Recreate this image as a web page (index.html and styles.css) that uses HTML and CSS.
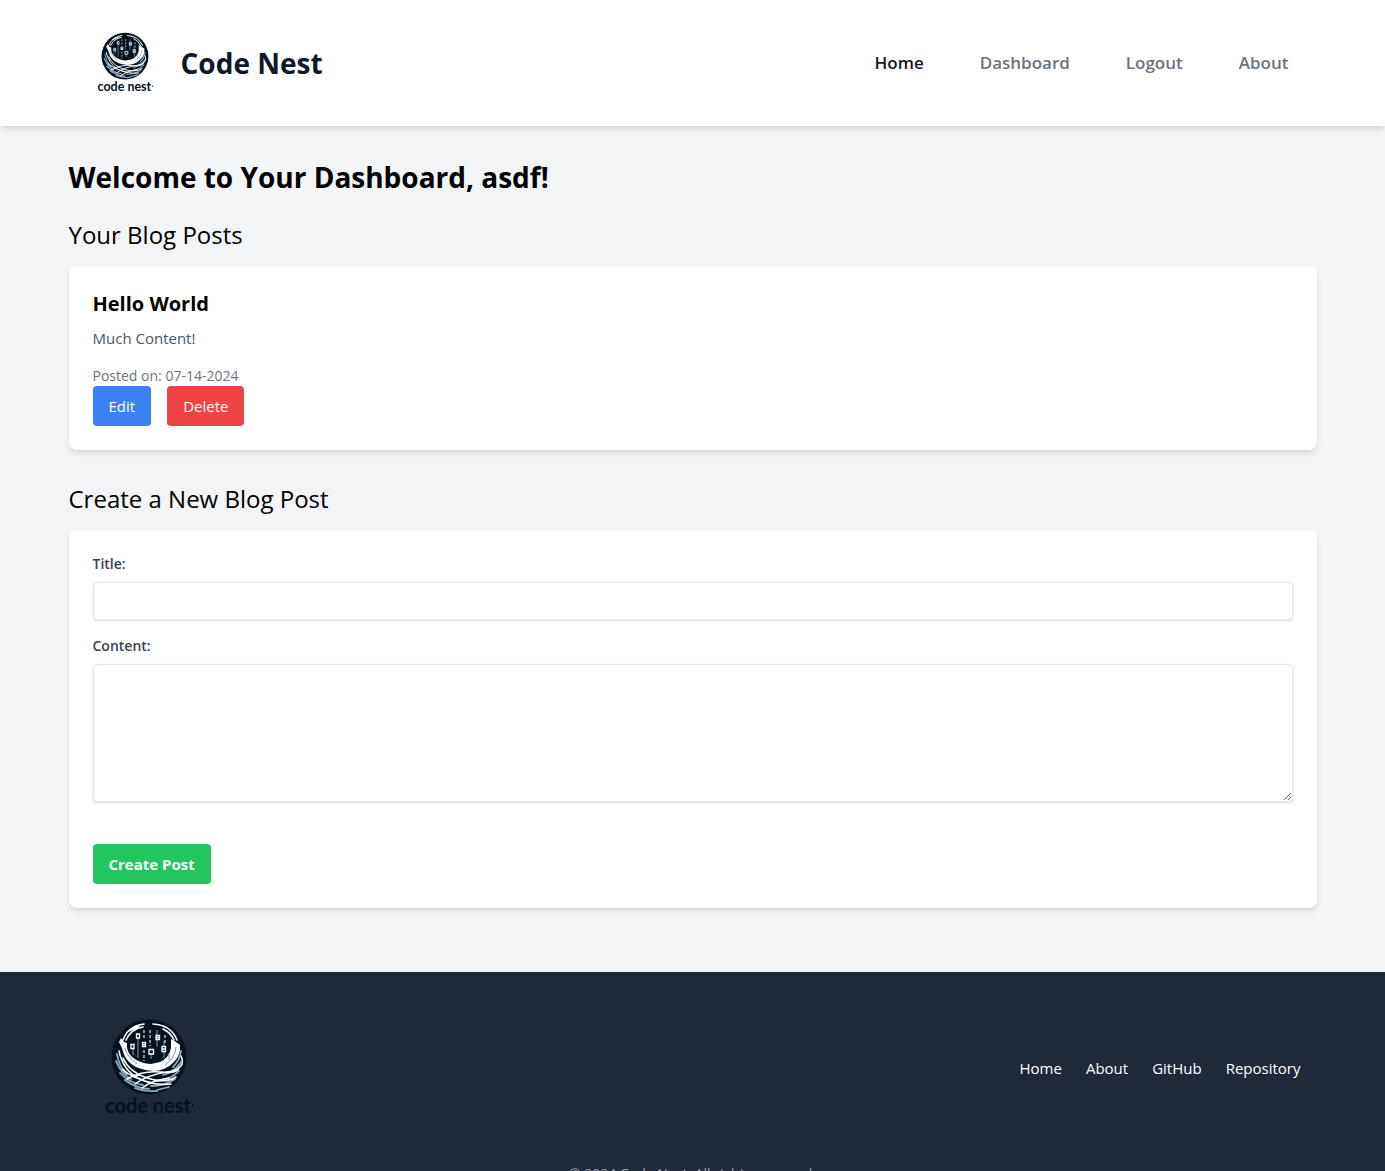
FILE: index.html
```html
<!DOCTYPE html>
<html lang="en">
<head>
<meta charset="utf-8">
<meta name="viewport" content="width=device-width, initial-scale=1">
<title>Code Nest</title>
<link rel="stylesheet" href="styles.css">
</head>
<body>
<svg class="sprite" aria-hidden="true">
  <symbol id="nest" viewBox="0 0 128 128">
    <circle cx="64" cy="53" r="37.5" fill="#06121d"/>
    <g fill="none" stroke="#8fa9bd" stroke-width="1.8" stroke-linecap="round">
      <path d="M32 50Q34 63 42 70M31 57Q36 70 46 75M35 69Q44 79 58 81M40 76Q50 84 64 85M50 84Q60 88 72 87M66 82Q80 82 90 75M70 77Q86 76 94 67M78 71Q90 68 96 58M72 86L84 83M96 47Q95 56 88 63"/>
    </g>
    <g fill="none" stroke="#fff" stroke-linecap="round">
      <path stroke-width="1.6" d="M38 36Q43 22 59 20M41 36Q46 25 58 23M68 20Q86 21 92 36M78 25Q86 29 89 36M44 27L54 22"/>
      <path stroke-width="1.5" d="M34 47Q38 66 53 74T86 80M38 54Q44 68 62 74T91 73M37 65Q48 75 68 79M42 75Q58 66 76 68T94 63M50 80Q62 71 82 68T96 52M57 84Q68 76 84 74"/>
    </g>
    <path fill="#fff" d="M34 38L36 34L39 38L42 39Q41 47 47 53Q56 60 66 60L75 58Q84 54 86 44L86 35L91 38L95 41Q96 51 89 58Q80 67 68 67Q52 66 44 58Q39 53 37 44Z"/>
    <path fill="none" stroke="#7892a8" stroke-width="1" d="M40 44Q42 53 52 60M91 43Q90 54 80 61"/>
    <g stroke="#8997a3" stroke-width="1">
      <path d="M53 34V54M79 37V54M48 45V51M72 26V43M84 49V56M66 50V55"/>
    </g>
    <g fill="#06121d" stroke="#fff" stroke-width="1.3">
      <path d="M51.500 30h3v4h-3zM57.500 38.500h3v4h-3zM71 31.500h3.500v4H71zM64 45.500h4.500v4.500H64zM77 42.500h3.500v5H77zM46 40.500h3v4h-3z"/>
      <path d="M71 33.500h3.500M57.500 40.500h3M77 45h3.500"/>
    </g>
    <path stroke="#dbe3e9" stroke-width="1.2" stroke-dasharray="3 2" d="M59 26V36M65 26V42M80 31V40M59 46V57"/>
    <text x="20" y="109" class="logo-word">code nest</text>
    <circle cx="108" cy="101" r="1" fill="#06121d"/>
  </symbol>
</svg>

<header class="site-header">
  <div class="container header-row">
    <div class="brand">
      <svg class="logo-small" role="img" aria-label="Code Nest logo"><use href="#nest"/></svg>
      <span class="brand-name">Code Nest</span>
    </div>
    <nav class="main-nav" aria-label="Main">
      <a class="nav-link active" href="#">Home</a>
      <a class="nav-link" href="#">Dashboard</a>
      <a class="nav-link" href="#">Logout</a>
      <a class="nav-link" href="#">About</a>
    </nav>
  </div>
</header>

<main class="container dashboard">
  <h1 class="page-title">Welcome to Your Dashboard, asdf!</h1>
  <section class="section">
    <h2 class="section-title">Your Blog Posts</h2>
    <article class="card">
      <h3 class="post-title">Hello World</h3>
      <p class="post-content">Much Content!</p>
      <p class="post-date">Posted on: 07-14-2024</p>
      <div class="actions">
        <button class="btn btn-edit" type="button">Edit</button>
        <button class="btn btn-delete" type="button">Delete</button>
      </div>
    </article>
  </section>
  <section class="section">
    <h2 class="section-title">Create a New Blog Post</h2>
    <form class="card">
      <label class="label" for="title">Title:</label>
      <input class="field field-title" id="title" name="title" type="text">
      <label class="label" for="content">Content:</label>
      <textarea class="field field-content" id="content" name="content" rows="5"></textarea>
      <button class="btn btn-create" type="submit">Create Post</button>
    </form>
  </section>
</main>

<footer class="site-footer">
  <div class="container footer-row">
    <svg class="logo-large" role="img" aria-label="Code Nest logo"><use href="#nest"/></svg>
    <nav class="footer-nav" aria-label="Footer">
      <a class="footer-link" href="#">Home</a>
      <a class="footer-link" href="#">About</a>
      <a class="footer-link" href="#">GitHub</a>
      <a class="footer-link" href="#">Repository</a>
    </nav>
  </div>
  <p class="copyright">© 2024 Code Nest. All rights reserved.</p>
</footer>
</body>
</html>
```
FILE: styles.css
```css
*, *::before, *::after { box-sizing: border-box; }

html, body { height: 100%; }

body {
  margin: 0;
  overflow: hidden auto;
  background: #f3f4f6;
  color: #000;
  font: 15px/24px "Segoe UI", "Open Sans", "Noto Sans", sans-serif;
}

h1, h2, h3, p { margin: 0; }
a { color: inherit; text-decoration: none; }

.sprite { display: none; }
.logo-word { font: 700 20px "Lato", sans-serif; fill: #06121d; }

.container {
  max-width: 1280px;
  margin: 0 auto;
  padding: 0 16px;
}

.site-header {
  background: #fff;
  box-shadow: 0 4px 6px -1px rgb(0 0 0 / 10%), 0 2px 4px -2px rgb(0 0 0 / 10%);
}

.header-row {
  display: flex;
  align-items: center;
  justify-content: space-between;
  min-height: 126px;
  padding: 16px 32px;
}

.brand { display: flex; align-items: center; gap: 16px; }
.logo-small { width: 80px; height: 80px; }
.brand-name { font-size: 28px; line-height: 36px; font-weight: 700; color: #111827; }

.main-nav { display: flex; gap: 32px; }
.nav-link { padding: 8px 12px; font-size: 17px; line-height: 24px; font-weight: 600; color: #6b7280; }
.nav-link.active { color: #111827; }

.dashboard { padding-top: 32px; padding-bottom: 32px; }
.page-title { margin-bottom: 22px; font-size: 28px; line-height: 38px; font-weight: 700; }
.section { margin-bottom: 32px; }
.section-title { margin-bottom: 14px; font-size: 24px; line-height: 34px; font-weight: 500; }

.card {
  padding: 24px;
  border-radius: 8px;
  background: #fff;
  box-shadow: 0 4px 6px -1px rgb(0 0 0 / 10%), 0 2px 4px -2px rgb(0 0 0 / 10%);
}

.post-title { margin-bottom: 8px; font-size: 20px; line-height: 28px; font-weight: 700; }
.post-content { margin-bottom: 16px; color: #4b5563; }
.post-date { font-size: 14px; line-height: 20px; color: #6b7280; }
.actions { display: flex; gap: 16px; }

.btn {
  padding: 8px 16px;
  border: 0;
  border-radius: 4px;
  color: #fff;
  font: inherit;
  cursor: pointer;
}
.btn-edit { background: #3b82f6; }
.btn-delete { background: #ef4444; }
.btn-create { background: #22c55e; font-weight: 700; }

.label {
  display: block;
  margin-bottom: 8px;
  color: #374151;
  font-size: 14px;
  line-height: 20px;
  font-weight: 600;
}

.field {
  display: block;
  width: 100%;
  padding: 8px 12px;
  border: 1px solid #e5e7eb;
  border-radius: 4px;
  background: #fff;
  box-shadow: 0 1px 3px rgb(0 0 0 / 10%), 0 1px 2px -1px rgb(0 0 0 / 10%);
  color: #374151;
  font: inherit;
}
.field-title { height: 38px; margin-bottom: 16px; }
.field-content { height: 138px; margin-bottom: 42px; resize: vertical; }

.site-footer { padding: 32px 0; background: #1f2937; color: #fff; }
.footer-row {
  display: flex;
  align-items: center;
  justify-content: space-between;
  padding: 0 32px;
}
.logo-large { width: 128px; height: 128px; }
.footer-nav { display: flex; gap: 24px; }
.copyright { margin-top: 32px; color: #9ca3af; font-size: 14px; line-height: 20px; text-align: center; }
```
